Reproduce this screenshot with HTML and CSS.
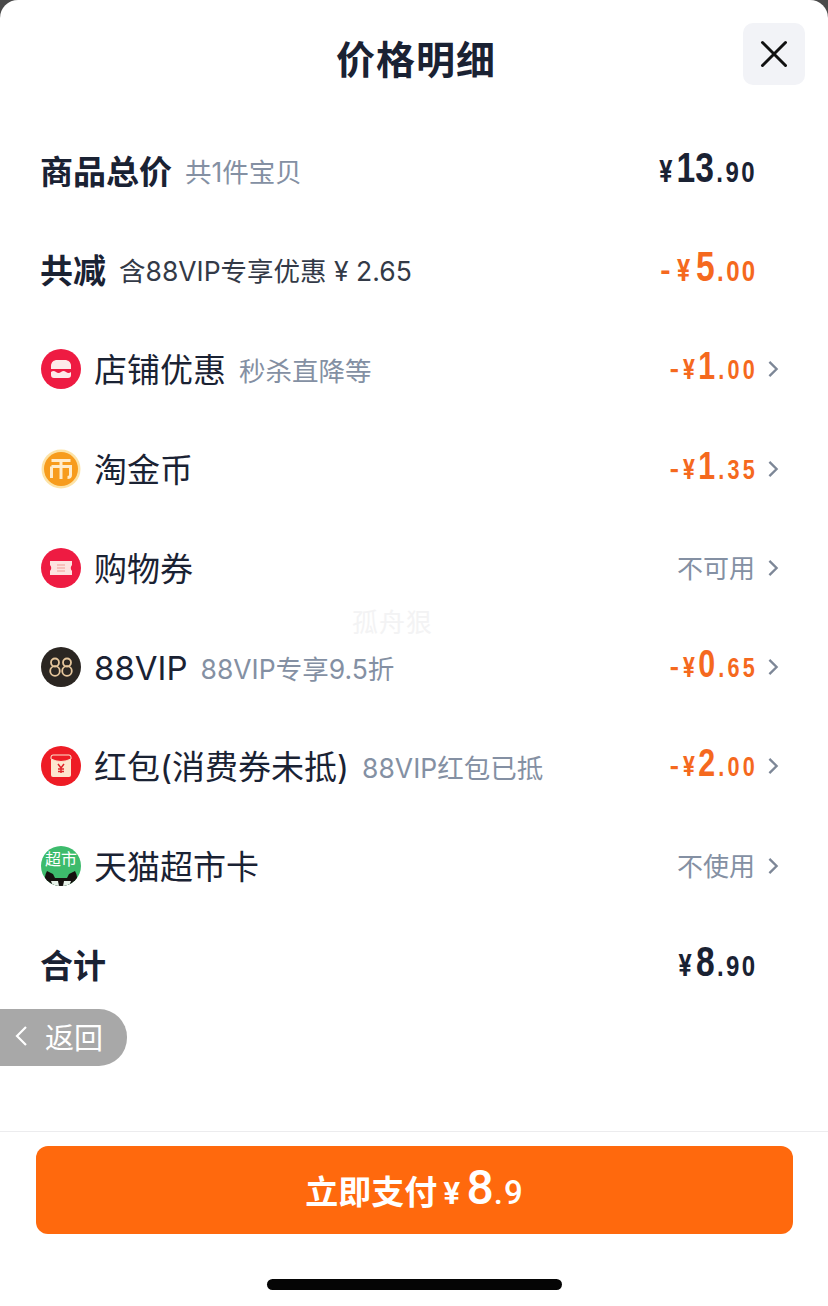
FILE: index.html
```html
<!DOCTYPE html>
<html lang="zh-CN">

<head>
    <meta charset="UTF-8">
    <meta name="viewport" content="width=device-width, initial-scale=1.0">
    <title>价格明细</title>
    <link rel="stylesheet" href="styles.css">
</head>

<body>
    <div class="sheet">
        <header class="sheet-header">
            <h1>价格明细</h1>
            <button class="btn-close" aria-label="关闭">
                <svg width="30" height="30" viewBox="0 0 30 30">
                    <path d="M3.500 3.500 L26.500 26.500 M26.500 3.500 L3.500 26.500" stroke="#111" stroke-width="3" stroke-linecap="round" fill="none" />
                </svg>
            </button>
        </header>

        <div class="list">
            <div class="row row-plain">
                <span class="label label-bold">商品总价</span>
                <span class="sub">共1件宝贝</span>
                <span class="price"><i class="yen">¥</i><b>13</b><i class="dec">.90</i></span>
            </div>

            <div class="row row-plain">
                <span class="label label-bold">共减</span>
                <span class="sub sub-dark">含88VIP专享优惠 ¥ 2.65</span>
                <span class="price price-off"><i class="yen">-¥</i><b>5</b><i class="dec">.00</i></span>
            </div>

            <div class="row">
                <svg class="icon" viewBox="0 0 40 40">
                    <circle cx="20" cy="20" r="20" fill="#ee1b42" />
                    <path d="M10 20 V17 C10 13 13 11 16 11 H24 C27 11 30 13 30 17 V20 Z" fill="#fdeaea" />
                    <path d="M10 23 Q12.500 21 15 23 T20 23 T25 23 T30 23 V26 Q30 29 27 29 H13 Q10 29 10 26 Z" fill="#fdeaea" />
                </svg>
                <span class="label">店铺优惠</span>
                <span class="sub">秒杀直降等</span>
                <span class="price price-off price-small"><i class="yen">-¥</i><b>1</b><i class="dec">.00</i></span>
                <svg class="chev" viewBox="0 0 12 20"><path d="M2 2 L10 10 L2 18" /></svg>
            </div>

            <div class="row">
                <svg class="icon" viewBox="0 0 40 40">
                    <circle cx="20" cy="20" r="19.500" fill="#fde3a6" />
                    <circle cx="20" cy="20" r="17" fill="#f79c1d" />
                    <path d="M10.500 11.500 H29.500 M20 11.500 V30 M10.500 17.500 H29.500 V26 Q29.500 28.500 26.500 28.500 M10.500 17.500 V29" stroke="#ffeccb" stroke-width="3" fill="none" />
                </svg>
                <span class="label">淘金币</span>
                <span class="price price-off price-small"><i class="yen">-¥</i><b>1</b><i class="dec">.35</i></span>
                <svg class="chev" viewBox="0 0 12 20"><path d="M2 2 L10 10 L2 18" /></svg>
            </div>

            <div class="row">
                <svg class="icon" viewBox="0 0 40 40">
                    <circle cx="20" cy="20" r="20" fill="#ee1b42" />
                    <path d="M9 13 H31 V17 Q28.500 20 31 23 V27 H9 V23 Q11.500 20 9 17 Z" fill="#fde3e0" />
                    <path d="M16 17 H24 M16 20 H24 M16 23 H24" stroke="#f5b5ae" stroke-width="1.600" />
                </svg>
                <span class="label">购物券</span>
                <span class="status">不可用</span>
                <svg class="chev" viewBox="0 0 12 20"><path d="M2 2 L10 10 L2 18" /></svg>
            </div>

            <div class="row">
                <svg class="icon" viewBox="0 0 40 40">
                    <circle cx="20" cy="20" r="20" fill="#2b2622" />
                    <g fill="none" stroke="#e6c69c" stroke-width="1.800">
                        <circle cx="14" cy="15.500" r="4" />
                        <circle cx="14" cy="24" r="4.800" />
                        <circle cx="26" cy="15.500" r="4" />
                        <circle cx="26" cy="24" r="4.800" />
                    </g>
                </svg>
                <span class="label">88VIP</span>
                <span class="sub">88VIP专享9.5折</span>
                <span class="price price-off price-small"><i class="yen">-¥</i><b>0</b><i class="dec">.65</i></span>
                <svg class="chev" viewBox="0 0 12 20"><path d="M2 2 L10 10 L2 18" /></svg>
            </div>

            <div class="row">
                <svg class="icon" viewBox="0 0 40 40">
                    <circle cx="20" cy="20" r="20" fill="#ee1c25" />
                    <rect x="10" y="9" width="20" height="22" rx="2" fill="#fde6cf" />
                    <path d="M10 11 Q10 9 12 9 H28 Q30 9 30 11 V13 Q20 18 10 13 Z" fill="#ee1c25" stroke="#fde6cf" stroke-width="1" />
                    <path d="M17 18 L20 22 L23 18 M20 22 V27 M17 23 H23 M17 25.500 H23" stroke="#e0252b" stroke-width="1.500" fill="none" />
                </svg>
                <span class="label">红包(消费券未抵)</span>
                <span class="sub">88VIP红包已抵</span>
                <span class="price price-off price-small"><i class="yen">-¥</i><b>2</b><i class="dec">.00</i></span>
                <svg class="chev" viewBox="0 0 12 20"><path d="M2 2 L10 10 L2 18" /></svg>
            </div>

            <div class="row">
                <span class="icon icon-market">
                    <span class="market-text">超市</span>
                    <svg class="market-cat" viewBox="0 0 40 16">
                        <path d="M4 15 Q3 6 6 1 L12 4 L14 8 H26 L28 4 L34 1 Q37 6 36 15 L30 16 H10 Z" fill="#15110f" />
                        <path d="M10 11 H30 L28 16 H12 Z" fill="#e8f3ea" />
                        <path d="M17 11 H23 L22 16 H18 Z" fill="#15110f" />
                    </svg>
                </span>
                <span class="label">天猫超市卡</span>
                <span class="status">不使用</span>
                <svg class="chev" viewBox="0 0 12 20"><path d="M2 2 L10 10 L2 18" /></svg>
            </div>

            <div class="row row-plain">
                <span class="label label-bold">合计</span>
                <span class="price"><i class="yen">¥</i><b>8</b><i class="dec">.90</i></span>
            </div>
        </div>

        <footer class="sheet-footer">
            <button class="btn-pay">立即支付<i class="pay-yen">¥</i><b>8</b><i class="pay-dec">.9</i></button>
            <div class="home-bar"></div>
        </footer>

        <div class="back-pill">
            <svg width="14" height="22" viewBox="0 0 14 22">
                <path d="M12 2 L3 11 L12 20" stroke="#fff" stroke-width="2.200" fill="none" />
            </svg>
            <span>返回</span>
        </div>

        <div class="watermark">孤舟狠</div>
    </div>
</body>

</html>
```

FILE: styles.css
```css
:root {
    --ink: #1a2233;
    --grey: #8490a3;
    --orange: #f5691e;
    --cn: "Inter", "Noto Sans CJK SC", "Noto Sans", sans-serif;
    --num: "Liberation Sans", sans-serif;
}

* {
    box-sizing: border-box;
    margin: 0;
    padding: 0;
}

html,
body {
    height: 100%;
    overflow: hidden;
    background: #4a4a4a;
}

body {
    font-family: var(--cn);
    color: var(--ink);
}

i {
    font-style: normal;
}

.sheet {
    position: relative;
    height: 100vh;
    display: flex;
    flex-direction: column;
    background: #fff;
    border-radius: 18px 18px 0 0;
    overflow: hidden;
}

.sheet-header {
    height: 121px;
    padding: 23px 23px 0;
    display: flex;
    justify-content: flex-end;
    align-items: flex-start;
    position: relative;
}

.sheet-header h1 {
    position: absolute;
    left: 4px;
    right: 0;
    top: 33px;
    text-align: center;
    font-size: 39px;
    letter-spacing: 1px;
    line-height: 54px;
    font-weight: 700;
}

.btn-close {
    width: 62px;
    height: 62px;
    border: none;
    border-radius: 10px;
    background: #f2f3f7;
    display: flex;
    justify-content: center;
    align-items: center;
}

.list {
    flex: 1;
}

.row {
    height: 99.3px;
    padding: 0 49px 0 41px;
    display: flex;
    align-items: center;
}

.row-plain {
    padding-right: 73px;
    padding-left: 40px;
}

.icon {
    width: 40px;
    height: 40px;
    flex-shrink: 0;
    margin-right: 13px;
}

.label {
    font-size: 33px;
    line-height: 44px;
    font-weight: 400;
    padding-top: 2px;
}

.label-bold {
    font-weight: 700;
}

.sub {
    margin-left: 13px;
    font-size: 26.5px;
    color: var(--grey);
}

.sub-dark {
    color: #333a47;
}

.status {
    margin-left: auto;
    padding-bottom: 2px;
    font-size: 26px;
    color: var(--grey);
}

/* price digits are a condensed face, squeezed from the right edge */
.price {
    margin-left: auto;
    padding-bottom: 6px;
    font-family: var(--num);
    font-weight: 700;
    white-space: nowrap;
    display: flex;
    align-items: baseline;
    transform: scaleX(0.8);
    transform-origin: right center;
}

.price b {
    font-size: 42px;
    line-height: 44px;
}

.price .yen {
    font-family: "Inter", sans-serif;
    font-size: 30px;
    letter-spacing: 5px;
}

.price .dec {
    font-size: 30px;
    letter-spacing: 3px;
    margin-left: 3px;
    margin-right: -3px;
}

.price-off {
    color: var(--orange);
}

.price-off .yen {
    letter-spacing: 7px;
}

.price-small b {
    font-size: 38px;
}

.price-small .yen {
    font-size: 27px;
    letter-spacing: 4px;
}

.price-small .dec {
    font-size: 27px;
    letter-spacing: 4px;
    margin-left: 4px;
    margin-right: -4px;
}

.chev {
    width: 12px;
    height: 18px;
    margin-left: 12px;
    flex-shrink: 0;
}

.chev path {
    fill: none;
    stroke: #7d8797;
    stroke-width: 2.600;
}

.icon-market {
    position: relative;
    border-radius: 50%;
    background: #3dbb6c;
    overflow: hidden;
    display: block;
}

.market-text {
    display: block;
    text-align: center;
    font-size: 16px;
    line-height: 26px;
    color: #fff;
}

.market-cat {
    position: absolute;
    left: 0;
    bottom: 0;
    width: 40px;
    height: 16px;
}

.sheet-footer {
    border-top: 1px solid #ececee;
    padding: 14px 35px 16px 36px;
    display: flex;
    flex-direction: column;
    align-items: center;
}

.btn-pay {
    width: 100%;
    height: 88px;
    border: none;
    border-radius: 12px;
    background: #ff690d;
    color: #fff;
    font-family: var(--cn);
    font-size: 33px;
    font-weight: 700;
    display: flex;
    justify-content: center;
    align-items: baseline;
    padding-top: 18px;
}

.btn-pay b {
    font-family: "Roboto", sans-serif;
    font-size: 48px;
    line-height: 48px;
    font-weight: 500;
}

.pay-yen {
    font-size: 30px;
    margin-left: 6px;
    margin-right: 6px;
}

.pay-dec {
    font-family: "Roboto", sans-serif;
    font-size: 33px;
    font-weight: 500;
    letter-spacing: 1px;
}

.home-bar {
    width: 295px;
    height: 11px;
    margin-top: 45px;
    border-radius: 6px;
    background: #050505;
}

.back-pill {
    position: absolute;
    left: 0;
    top: 1009px;
    width: 127px;
    height: 57px;
    padding: 0 0 3px 14px;
    border-radius: 0 28px 28px 0;
    background: #a8a8a8;
    color: #fff;
    font-size: 29px;
    display: flex;
    align-items: center;
    gap: 17px;
}

.watermark {
    position: absolute;
    left: 352px;
    top: 602px;
    font-size: 26px;
    letter-spacing: 1px;
    color: #f3f3f4;
}
```
